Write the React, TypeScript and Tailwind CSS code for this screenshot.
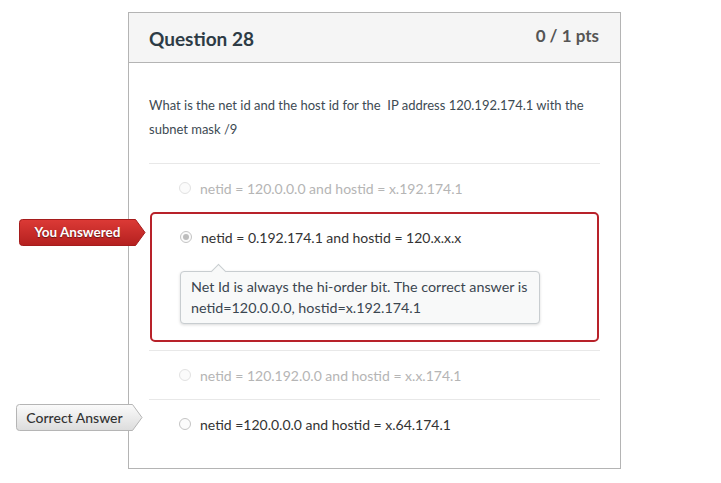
import React from 'react';

// ── Ribbon label ──────────────────────────────────────────────────────────────

function Ribbon({ tone, label }: { tone: 'red' | 'gray'; label: string }) {
  const red = tone === 'red';
  const id = red ? 'rib-red' : 'rib-gray';
  return (
    <div className="relative flex items-center w-[127px] h-[27px]">
      <svg className="absolute inset-0" width="127" height="27" viewBox="0 0 127 27">
        <defs>
          <linearGradient id={id} x1="0" y1="0" x2="0" y2="1">
            {red ? (
              <>
                <stop offset="0" stopColor="#dc3a36" />
                <stop offset="1" stopColor="#b4201f" />
              </>
            ) : (
              <>
                <stop offset="0" stopColor="#fbfbfb" />
                <stop offset="1" stopColor="#dcdcdc" />
              </>
            )}
          </linearGradient>
        </defs>
        <path
          d="M3.5 0.5 H116.5 L126 13.5 L116.5 26.5 H3.5 Q0.5 26.5 0.5 23.5 V3.5 Q0.5 0.5 3.5 0.5 Z"
          fill={`url(#${id})`}
          stroke={red ? '#a51c1c' : '#b5b5b5'}
          strokeWidth="1"
        />
      </svg>
      <span
        className={
          red
            ? 'relative w-[117px] text-center text-[13.5px] font-bold text-white [text-shadow:0_1px_1px_rgba(0,0,0,0.45)]'
            : 'relative w-[117px] text-center text-[14px] font-medium text-[#333]'
        }
      >
        {label}
      </span>
    </div>
  );
}

// ── Radio ─────────────────────────────────────────────────────────────────────

function Radio({ checked = false, faint = false }: { checked?: boolean; faint?: boolean }) {
  return (
    <span
      className={
        'flex items-center justify-center w-[12px] h-[12px] rounded-full border flex-shrink-0 bg-[#fbfbfb] ' +
        (faint ? 'border-[#e2e2e2]' : 'border-[#c4c4c4]')
      }
    >
      {checked && <span className="w-[6px] h-[6px] rounded-full bg-[#bdbdbd]" />}
    </span>
  );
}

function AnswerRow({ text, faint }: { text: string; faint?: boolean }) {
  return (
    <div className="flex items-center h-[48px] pl-[30px] gap-[9px]">
      <Radio faint={faint} />
      <span className={faint ? 'text-[14px] text-[#b5b5b5]' : 'text-[14px] text-[#333]'}>{text}</span>
    </div>
  );
}

// ── Page ──────────────────────────────────────────────────────────────────────

export default function App() {
  return (
    <div className="min-h-screen bg-white pl-[128px] pt-[12px] font-['Lato','Open_Sans',sans-serif]">
      <div className="w-[493px] border border-[#b4b4b4] bg-white">
        {/* Header */}
        <div className="flex justify-between h-[50px] bg-[#f5f5f5] border-b border-[#b4b4b4] px-[20px]">
          <h2 className="text-[19px] font-bold text-[#2d3b45] leading-none pt-[16px]">Question 28</h2>
          <span className="text-[17px] font-bold text-[#555] leading-none pt-[14px] pr-[1px]">0 / 1 pts</span>
        </div>

        {/* Body */}
        <div className="px-[20px] pt-[30px] pb-[20px]">
          <p className="text-[13px] leading-[24px] text-[#3d4a53] pb-[22px]">
            What is the net id and the host id for the&nbsp; IP address 120.192.174.1 with the subnet mask /9
          </p>

          <div className="border-t border-[#e8e8e8]">
            <AnswerRow faint text="netid = 120.0.0.0 and hostid = x.192.174.1" />

            {/* Selected (wrong) answer */}
            <div className="relative ml-[1px] mr-[1px] border-2 border-[#b8222a] rounded-[5px]">
              <div className="absolute left-[-133px] top-[5px]">
                <Ribbon tone="red" label="You Answered" />
              </div>
              <div className="flex items-center h-[46px] pl-[28px] gap-[9px]">
                <Radio checked />
                <span className="text-[14px] text-[#333]">netid = 0.192.174.1 and hostid = 120.x.x.x</span>
              </div>
              <div className="relative ml-[28px] mt-[11px] mb-[16px] w-[360px] rounded-[4px] border border-[#c8cdd0] bg-[#f8f9f9] px-[10px] pt-[4px] pb-[5px] shadow-[0_1px_3px_rgba(0,0,0,0.15)]">
                <span className="absolute left-[32px] top-[-6px] w-[11px] h-[11px] rotate-45 bg-[#f8f9f9] border-l border-t border-[#c8cdd0]" />
                <p className="relative text-[14.3px] leading-[21px] text-[#3b4650]">
                  Net Id is always the hi-order bit. The correct answer is netid=120.0.0.0, hostid=x.192.174.1
                </p>
              </div>
            </div>

            <div className="mt-[8px] border-t border-[#e8e8e8]">
              <AnswerRow faint text="netid = 120.192.0.0 and hostid = x.x.174.1" />
            </div>

            <div className="relative border-t border-[#e8e8e8]">
              <div className="absolute left-[-133px] top-[4px]">
                <Ribbon tone="gray" label="Correct Answer" />
              </div>
              <AnswerRow text="netid =120.0.0.0 and hostid = x.64.174.1" />
            </div>
          </div>
        </div>
      </div>
    </div>
  );
}
